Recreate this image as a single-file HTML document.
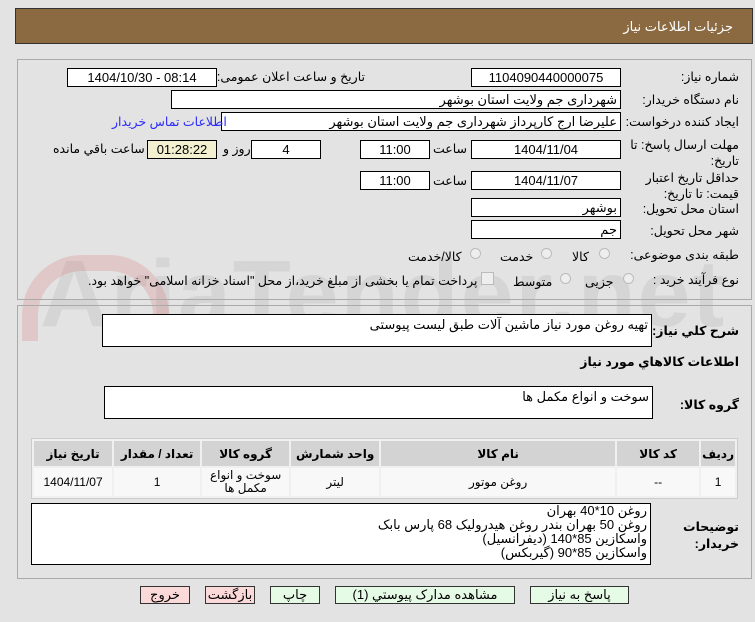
<!DOCTYPE html>
<html><head><meta charset="utf-8"><style>
body{margin:0;width:755px;height:622px;background:#e3e3e3;font-family:Tahoma,"Liberation Sans","DejaVu Sans",sans-serif;font-size:12px;color:#000;position:relative;overflow:hidden}
.a{position:absolute}
.hdr{left:15px;top:8px;width:736px;height:34px;background:#8b6a41;border:1px solid #333}
.hdr span{position:absolute;right:19px;top:10px;color:#fff;font-size:13px}
.pan{border:1px solid #aaa;background:transparent}
.box{position:absolute;background:#fff;border:1px solid #000;box-sizing:border-box;height:19px;text-align:center;line-height:17px;font-size:13px}
.l{position:absolute;direction:rtl;white-space:nowrap;font-size:12.5px}
.r{text-align:right;padding-right:3px}
.rad{position:absolute;width:11px;height:11px;border-radius:50%;border:1px solid #bbb;background:#eee;box-sizing:border-box}
table{border-collapse:separate;border-spacing:2px;position:absolute;left:31px;top:438px;width:707px;background:#f0f0f0;border:1px solid #ccc}
td{text-align:center;font-size:12px;background:#f8f8f8}
th{background:#d3d3d3;font-size:12px;height:23px}
.btn{position:absolute;top:586px;height:18px;border:1px solid #333;box-sizing:border-box;text-align:center;line-height:16px;font-size:13px;background:#e6fbe6}
.wm{position:absolute;left:40px;top:240px;font-size:95px;font-weight:bold;color:rgba(150,150,150,.18);font-family:"Liberation Sans",sans-serif;letter-spacing:2px}
</style></head><body>
<div class="a hdr"><span>جزئیات اطلاعات نیاز</span></div>
<div class="wm">AriaTender.net</div>
<div class="a" style="left:22px;top:255px;width:115px;height:70px;border:16px solid rgba(220,120,120,.25);border-bottom:none;border-radius:60px 60px 0 0"></div>
<div class="a pan" style="left:17px;top:59px;width:733px;height:239px"></div>
<div class="a pan" style="left:17px;top:305px;width:733px;height:272px"></div>

<div class="l" style="right:16px;top:69px">شماره نیاز:</div>
<div class="box" style="left:471px;top:68px;width:150px">1104090440000075</div>
<div class="l" style="right:390px;top:69px">تاریخ و ساعت اعلان عمومی:</div>
<div class="box" style="left:67px;top:68px;width:150px">1404/10/30 - 08:14</div>

<div class="l" style="right:16px;top:92px">نام دستگاه خریدار:</div>
<div class="box r" style="left:171px;top:90px;width:450px">شهرداری جم ولایت استان بوشهر</div>

<div class="l" style="right:16px;top:114px">ایجاد کننده درخواست:</div>
<div class="box r" style="left:221px;top:112px;width:400px">علیرضا ارج کارپرداز شهرداری جم ولایت استان بوشهر</div>
<div class="l" style="left:112px;top:114px;color:#2a2aff">اطلاعات تماس خریدار</div>

<div class="l" style="right:16px;top:137px;line-height:16px;text-align:right">مهلت ارسال پاسخ: تا<br>تاریخ:</div>
<div class="box" style="left:471px;top:140px;width:150px">1404/11/04</div>
<div class="l" style="left:433px;top:141px">ساعت</div>
<div class="box" style="left:360px;top:140px;width:70px">11:00</div>
<div class="box" style="left:251px;top:140px;width:70px">4</div>
<div class="l" style="left:223px;top:141px">روز و</div>
<div class="box" style="left:147px;top:140px;width:70px;background:#f3f0d2">01:28:22</div>
<div class="l" style="left:53px;top:141px">ساعت باقي مانده</div>

<div class="l" style="right:16px;top:170px;line-height:16px;text-align:right">حداقل تاریخ اعتبار<br>قیمت: تا تاریخ:</div>
<div class="box" style="left:471px;top:171px;width:150px">1404/11/07</div>
<div class="l" style="left:433px;top:173px">ساعت</div>
<div class="box" style="left:360px;top:171px;width:70px">11:00</div>

<div class="l" style="right:16px;top:201px">استان محل تحویل:</div>
<div class="box r" style="left:471px;top:198px;width:150px">بوشهر</div>
<div class="l" style="right:16px;top:223px">شهر محل تحویل:</div>
<div class="box r" style="left:471px;top:220px;width:150px">جم</div>

<div class="l" style="right:16px;top:247px">طبقه بندی موضوعی:</div>
<div class="rad" style="left:599px;top:248px"></div><div class="l" style="left:572px;top:249px">کالا</div>
<div class="rad" style="left:541px;top:248px"></div><div class="l" style="left:500px;top:249px">خدمت</div>
<div class="rad" style="left:470px;top:248px"></div><div class="l" style="left:408px;top:249px">کالا/خدمت</div>

<div class="l" style="right:16px;top:272px">نوع فرآیند خرید :</div>
<div class="rad" style="left:623px;top:273px"></div><div class="l" style="left:585px;top:274px">جزیی</div>
<div class="rad" style="left:560px;top:273px"></div><div class="l" style="left:513px;top:274px">متوسط</div>
<div class="a" style="left:481px;top:272px;width:11px;height:11px;border:1px solid #bbb;background:#eee"></div>
<div class="l" style="left:88px;top:273px">پرداخت تمام یا بخشی از مبلغ خرید،از محل "اسناد خزانه اسلامی" خواهد بود.</div>

<div class="l" style="right:16px;top:323px;font-weight:bold">شرح كلي نياز:</div>
<div class="box r" style="left:102px;top:314px;width:550px;height:33px;text-align:right;line-height:20px">تهیه روغن مورد نیاز ماشین آلات طبق لیست پیوستی</div>
<div class="l" style="right:16px;top:354px;font-weight:bold">اطلاعات كالاهاي مورد نياز</div>
<div class="l" style="right:16px;top:397px;font-weight:bold">گروه كالا:</div>
<div class="box r" style="left:104px;top:386px;width:549px;height:33px;text-align:right;line-height:20px">سوخت و انواع مکمل ها</div>

<table dir="rtl"><tr><th style="width:28px">رديف</th><th style="width:80px">کد کالا</th><th style="width:232px">نام کالا</th><th style="width:86px">واحد شمارش</th><th style="width:85px">گروه کالا</th><th style="width:84px">تعداد / مقدار</th><th>تاریخ نیاز</th></tr>
<tr style="height:28px"><td>1</td><td>--</td><td>روغن موتور</td><td>لیتر</td><td style="line-height:13px">سوخت و انواع<br>مکمل ها</td><td>1</td><td>1404/11/07</td></tr></table>

<div class="l" style="right:16px;top:519px;font-weight:bold;line-height:17px;text-align:right">توضیحات<br>خریدار:</div>
<div class="box" style="left:31px;top:503px;width:620px;height:62px;text-align:right;padding-right:3px;line-height:14px;direction:rtl">روغن 10*40 بهران<br>روغن 50 بهران بندر روغن هیدرولیک 68 پارس بابک<br>واسکازین 85*140 (دیفرانسیل)<br>واسکازین 85*90 (گیربکس)</div>

<div class="btn" style="left:140px;width:50px;background:#fcd9d9">خروج</div>
<div class="btn" style="left:205px;width:50px;background:#fcd9d9">بازگشت</div>
<div class="btn" style="left:270px;width:50px">چاپ</div>
<div class="btn" style="left:335px;width:180px">مشاهده مدارک پیوستي (1)</div>
<div class="btn" style="left:530px;width:99px">پاسخ به نیاز</div>
</body></html>
